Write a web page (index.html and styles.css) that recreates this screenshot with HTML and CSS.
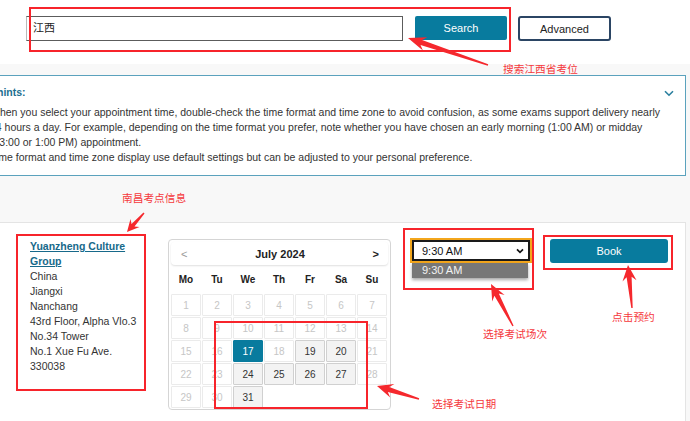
FILE: index.html
```html
<!DOCTYPE html>
<html lang="en">
<head>
<meta charset="utf-8">
<title>Test center search</title>
<link rel="stylesheet" href="styles.css">
</head>
<body>
<div class="page">
  <header class="search-bar">
    <div class="search-input">江西</div>
    <button class="btn btn-primary btn-search">Search</button>
    <button class="btn btn-outline btn-advanced">Advanced</button>
  </header>

  <main class="content">
    <section class="hints">
      <div class="hints-head">
        <h3 class="hints-title">hints:</h3>
        <svg class="hints-toggle" width="10" height="7" viewBox="0 0 10 7"><path d="M1 1.2 L5 5.2 L9 1.2" fill="none" stroke="#2a7f9e" stroke-width="1.6"/></svg>
      </div>
      <p class="hints-text">When you select your appointment time, double-check the time format and time zone to avoid confusion, as some exams support delivery nearly<br>24 hours a day. For example, depending on the time format you prefer, note whether you have chosen an early morning (1:00 AM) or midday<br>(13:00 or 1:00 PM) appointment.<br>Time format and time zone display use default settings but can be adjusted to your personal preference.</p>
    </section>

    <section class="center-card">
      <div class="address">
        <a class="center-name" href="#">Yuanzheng Culture Group</a>
        <div>China</div>
        <div>Jiangxi</div>
        <div>Nanchang</div>
        <div>43rd Floor, Alpha Vlo.3</div>
        <div>No.34 Tower</div>
        <div>No.1 Xue Fu Ave.</div>
        <div>330038</div>
      </div>

      <div class="calendar">
        <div class="cal-head">
          <span class="cal-prev">&lt;</span>
          <span class="cal-title">July 2024</span>
          <span class="cal-next">&gt;</span>
        </div>
        <div class="cal-weekdays">
          <span>Mo</span><span>Tu</span><span>We</span><span>Th</span><span>Fr</span><span>Sa</span><span>Su</span>
        </div>
        <div class="cal-grid">
          <span class="day off">1</span><span class="day off">2</span><span class="day off">3</span><span class="day off">4</span><span class="day off">5</span><span class="day off">6</span><span class="day off">7</span>
          <span class="day off">8</span><span class="day off">9</span><span class="day off">10</span><span class="day off">11</span><span class="day off">12</span><span class="day off">13</span><span class="day off">14</span>
          <span class="day off">15</span><span class="day off">16</span><span class="day selected">17</span><span class="day off">18</span><span class="day on">19</span><span class="day on">20</span><span class="day off">21</span>
          <span class="day off">22</span><span class="day off">23</span><span class="day on">24</span><span class="day on">25</span><span class="day on">26</span><span class="day on">27</span><span class="day off">28</span>
          <span class="day off">29</span><span class="day off">30</span><span class="day on">31</span>
        </div>
      </div>

      <div class="time-col">
        <div class="time-select">
          <span>9:30 AM</span>
          <svg class="select-caret" width="8" height="6" viewBox="0 0 8 6"><path d="M1 1.3 L4 4.3 L7 1.3" fill="none" stroke="#111" stroke-width="1.7"/></svg>
          <div class="time-option">9:30 AM</div>
        </div>
      </div>

      <div class="book-col">
        <button class="btn btn-primary btn-book">Book</button>
      </div>
    </section>
  </main>

  <div class="annotations">
    <div class="mark mark-search"></div>
    <div class="mark mark-address"></div>
    <div class="mark mark-dates"></div>
    <div class="mark mark-time"></div>
    <div class="mark mark-book"></div>

    <svg class="arrows" width="690" height="421" viewBox="0 0 690 421">
      <g fill="#f5282d">
        <polygon points="488.2,64.3 422.1,40.1 427.3,37.2 408,38 422.9,50.4 420.5,44.9 487.8,65.7"/>
        <polygon points="143.5,212.5 131.5,224 130.5,219.1 127,232 139.5,227.1 134.5,226.6 144.5,213.5"/>
        <polygon points="513.6,325.7 498.8,293.4 504.6,294.9 491,284 492.2,301.5 494.4,295.8 512.4,326.3"/>
        <polygon points="632.7,307.9 631.6,276.8 636.5,280.3 628,265 622.5,281.6 626.6,277.2 631.3,308.1"/>
        <polygon points="419.2,398.3 389.2,387.1 394.4,384 377,386 390.2,397.4 387.8,391.9 418.8,399.7"/>
      </g>
    </svg>

    <span class="note note-search">搜索江西省考位</span>
    <span class="note note-address">南昌考点信息</span>
    <span class="note note-time">选择考试场次</span>
    <span class="note note-book">点击预约</span>
    <span class="note note-dates">选择考试日期</span>
  </div>
</div>
</body>
</html>
```

FILE: styles.css
```css
* { box-sizing: border-box; }

html, body {
  margin: 0;
  padding: 0;
}

body {
  background: #f8f8f8;
  font-family: "Liberation Sans", "Noto Sans CJK SC", Arial, sans-serif;
  font-size: 10.5px;
  color: #333;
  overflow: hidden;
}

.page {
  position: relative;
  width: 690px;
  height: 421px;
  overflow: hidden;
}

/* ---------- search bar ---------- */
.search-bar {
  display: flex;
  align-items: flex-start;
  height: 64px;
  padding: 16px 0 0 26px;
  background: #fff;
}

.search-input {
  width: 377px;
  height: 25px;
  border: 1px solid #5c5c5c;
  border-left-color: #b9b9b9;
  padding: 0 6px;
  font-size: 11px;
  line-height: 23px;
  color: #222;
  background: #fff;
}

.btn {
  font-family: inherit;
  font-size: 11px;
  cursor: pointer;
  padding: 0;
}

.btn-primary {
  background: #087b9e;
  color: #fff;
  border: none;
  border-radius: 2px;
}

.btn-search {
  width: 92px;
  height: 24px;
  margin-left: 12px;
}

.btn-outline {
  background: #fff;
  color: #222;
  border: 2px solid #2b4564;
  border-radius: 3px;
}

.btn-advanced {
  width: 93px;
  height: 25px;
  margin-left: 11px;
}

/* ---------- content ---------- */
.content {
  margin-left: -30px;
  width: 716px;
  padding-top: 11px;
}

.hints {
  background: #fff;
  border: 1px solid #5ba2bd;
  padding: 9px 11px 10px 19px;
}

.hints-head {
  display: flex;
  justify-content: space-between;
  align-items: center;
}

.hints-title {
  margin: 0 0 0 7px;
  font-size: 10.5px;
  line-height: 15px;
  font-weight: bold;
  color: #1c6f8f;
}

.hints-toggle {
  display: block;
  margin-top: 1px;
}

.hints-text {
  margin: 5px 0 0;
  line-height: 15px;
  color: #333;
  white-space: nowrap;
}

/* ---------- test center card ---------- */
.center-card {
  display: flex;
  align-items: flex-start;
  margin-top: 46px;
  background: #fff;
  border: 1px solid #e4e4e4;
  padding: 16px 0 20px 59px;
  height: 240px;
}

.address {
  flex: none;
  width: 112px;
  margin-right: 26px;
  line-height: 15px;
  color: #333;
}

.center-name {
  display: block;
  color: #17698a;
  font-weight: bold;
  text-decoration: underline;
  text-underline-offset: 1px;
}

/* calendar */
.calendar {
  flex: none;
  width: 223px;
  height: 171px;
  border: 1px solid #d5d5d5;
  border-radius: 4px;
  padding: 2px;
}

.cal-head {
  display: flex;
  align-items: center;
  justify-content: space-between;
  height: 23px;
  padding: 0 9px 0 10px;
  border-radius: 4px;
  box-shadow: 0 1px 2px rgba(0, 0, 0, 0.13);
}

.cal-title {
  font-weight: bold;
  font-size: 11px;
  color: #222;
}

.cal-prev {
  color: #9a9a9a;
  font-size: 11px;
}

.cal-next {
  color: #222;
  font-size: 11px;
  font-weight: bold;
}

.cal-weekdays {
  display: grid;
  grid-template-columns: repeat(7, 30px);
  column-gap: 1px;
  height: 26px;
  align-items: center;
  margin-top: 1px;
}

.cal-weekdays span {
  text-align: center;
  font-weight: bold;
  font-size: 10px;
  color: #222;
}

.cal-grid {
  display: grid;
  grid-template-columns: repeat(7, 30px);
  grid-auto-rows: 22px;
  gap: 1px;
  margin-top: 2px;
}

.day {
  display: flex;
  align-items: center;
  justify-content: center;
  font-size: 10px;
  border: 1px solid #ebebeb;
  border-radius: 1px;
}

.day.off {
  color: #c6c6c6;
}

.day.on {
  background: #f3f3f3;
  border-color: #d0d0d0;
  color: #333;
}

.day.selected {
  background: #087b9e;
  border-color: #087b9e;
  color: #fff;
}

/* time select */
.time-col {
  flex: none;
  width: 122px;
  margin-left: 21px;
  padding-top: 1px;
}

.time-select {
  position: relative;
  display: flex;
  align-items: center;
  justify-content: space-between;
  width: 118px;
  height: 21px;
  border: 2px solid #1a1a1a;
  box-shadow: 0 0 0 2px #f3a61c;
  padding: 0 4px 0 8px;
  font-size: 11px;
  color: #111;
  background: #fff;
}

.time-option {
  position: absolute;
  left: -2px;
  top: 21px;
  width: 116px;
  height: 15px;
  padding-left: 10px;
  line-height: 15px;
  background: #777;
  color: #f2f2f2;
  font-size: 11px;
  box-shadow: 0 2px 3px rgba(0, 0, 0, 0.35);
}

.book-col {
  flex: none;
  margin-left: 16px;
}

.btn-book {
  width: 118px;
  height: 24px;
  border-radius: 3px;
}

/* ---------- annotations (overlay) ---------- */
.annotations {
  position: absolute;
  inset: 0;
  pointer-events: none;
}

.arrows {
  position: absolute;
  left: 0;
  top: 0;
}

.mark {
  position: absolute;
  border: 2px solid #f7242b;
}

.mark-search  { left: 29px;  top: 7px;   width: 482px; height: 45px; }
.mark-address { left: 16px;  top: 234px; width: 130px; height: 157px; }
.mark-dates   { left: 214px; top: 321px; width: 154px; height: 88px; }
.mark-time    { left: 403px; top: 228px; width: 131px; height: 62px; }
.mark-book    { left: 543px; top: 235px; width: 130px; height: 35px; }

.note {
  position: absolute;
  font-family: "Noto Sans CJK SC", sans-serif;
  font-size: 10.7px;
  line-height: 14px;
  color: #f5383c;
  white-space: nowrap;
}

.note-search  { left: 503px; top: 62px; }
.note-address { left: 122px; top: 191px; }
.note-time    { left: 483px; top: 327px; }
.note-book    { left: 612px; top: 310px; }
.note-dates   { left: 432px; top: 397px; }
```
